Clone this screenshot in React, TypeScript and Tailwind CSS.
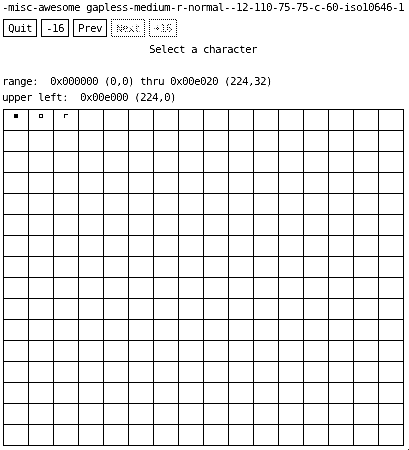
type ButtonProps = { label: string; disabled?: boolean };

function XButton({ label, disabled = false }: ButtonProps) {
  return (
    <button
      disabled={disabled}
      className="relative h-[18px] border border-black px-1 text-left leading-[16px] tracking-[-0.622px]"
    >
      <span className="block h-4 pt-px">{label}</span>
      {/* stipple pattern for insensitive buttons */}
      {disabled && (
        <span className="absolute -inset-px bg-[repeating-conic-gradient(#fff_0_25%,transparent_0_50%)] bg-[length:2px_2px]" />
      )}
    </button>
  );
}

const buttons: ButtonProps[] = [
  { label: "Quit" },
  { label: "-16" },
  { label: "Prev" },
  { label: "Next", disabled: true },
  { label: "+16", disabled: true },
];

function Glyph({ index }: { index: number }) {
  if (index === 0) return <span className="mt-1 ml-[10px] block size-1 bg-black" />;
  if (index === 1) return <span className="mt-1 ml-[10px] block size-1 border border-black" />;
  if (index === 2) return <span className="mt-1 ml-[10px] block size-1 border-t border-l border-black" />;
  return null;
}

export default function App() {
  return (
    <div className="relative h-[450px] w-[409px] overflow-hidden bg-white font-['DejaVu_Sans_Mono','Liberation_Mono',monospace] text-[11px] leading-4 tracking-[-0.622px] whitespace-pre text-black contrast-200">
      <div className="h-[19px] pl-[2px]">-misc-awesome gapless-medium-r-normal--12-110-75-75-c-60-iso10646-1</div>
      <div className="flex gap-1 pl-[3px]">
        {buttons.map((b) => (
          <XButton key={b.label} {...b} />
        ))}
      </div>
      <div className="mt-[5px] h-8 pl-[149px]">Select a character</div>
      <div className="pl-[2px]">range:  0x000000 (0,0) thru 0x00e020 (224,32)</div>
      <div className="pl-[2px]">upper left:  0x00e000 (224,0)</div>
      <div className="mt-[3px] ml-[3px] grid w-[401px] grid-cols-[repeat(16,25px)] border-t border-l border-black">
        {Array.from({ length: 256 }, (_, i) => (
          <div key={i} className="flex h-[21px] w-[25px] border-r border-b border-black">
            <Glyph index={i} />
          </div>
        ))}
      </div>
      <span className="absolute right-0 bottom-0 size-px bg-[#555]" />
    </div>
  );
}
